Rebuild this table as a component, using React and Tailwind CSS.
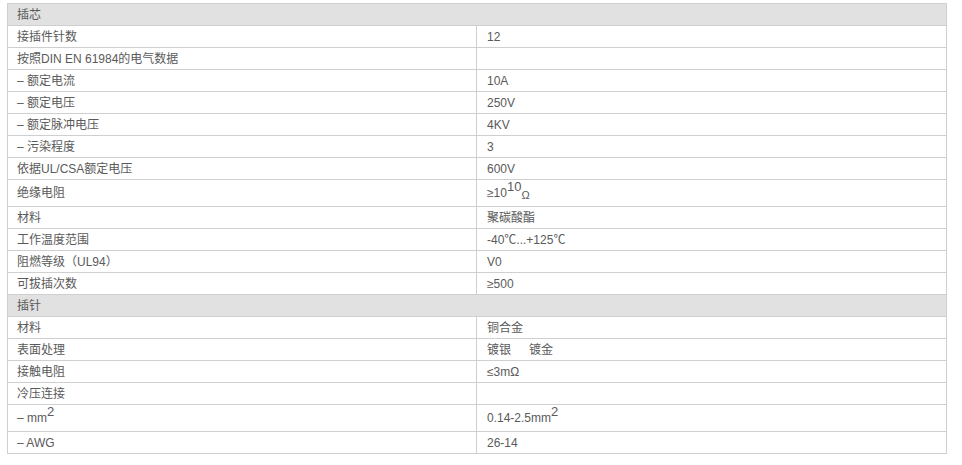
import React from 'react';

const SUP = ({ children }) => (
  <span className="text-[13px] relative top-[-6px] leading-none">{children}</span>
);

const ROWS = [
  { head: '插芯' },
  { label: '接插件针数', value: '12' },
  { label: '按照DIN EN 61984的电气数据', value: '' },
  { label: '– 额定电流', value: '10A' },
  { label: '– 额定电压', value: '250V' },
  { label: '– 额定脉冲电压', value: '4KV' },
  { label: '– 污染程度', value: '3' },
  { label: '依据UL/CSA额定电压', value: '600V' },
  {
    label: '绝缘电阻',
    value: (
      <span>
        ≥10<SUP>10</SUP>
        <span className="text-[11px] relative top-[2px]">Ω</span>
      </span>
    ),
    tall: true
  },
  { label: '材料', value: '聚碳酸酯' },
  { label: '工作温度范围', value: '-40℃...+125℃' },
  { label: '阻燃等级（UL94）', value: 'V0' },
  { label: '可拔插次数', value: '≥500' },
  { head: '插针' },
  { label: '材料', value: '铜合金' },
  {
    label: '表面处理',
    value: (
      <span>
        镀银<span className="ml-[18px]">镀金</span>
      </span>
    )
  },
  { label: '接触电阻', value: '≤3mΩ' },
  { label: '冷压连接', value: '' },
  {
    label: (
      <span>
        – mm<SUP>2</SUP>
      </span>
    ),
    value: (
      <span>
        0.14-2.5mm<SUP>2</SUP>
      </span>
    ),
    tall: true
  },
  { label: '– AWG', value: '26-14' }
];

export default function App() {
  return (
    <div
      className="bg-white w-[962px] h-[465px] pt-[3px] pl-[7px] text-[12px] text-[#5a5a5a]"
      style={{ fontFamily: '"Liberation Sans", Arial, "Noto Sans CJK SC", sans-serif' }}
    >
      <div className="w-[940px] border-t border-l border-r border-[#cfcfcf]">
        {ROWS.map((row, i) =>
          row.head ? (
            <div
              key={i}
              className="h-[22px] flex items-center pl-[9px] bg-[#e1e1e1] border-b border-[#cfcfcf]"
            >
              {row.head}
            </div>
          ) : (
            <div
              key={i}
              className={`flex border-b border-[#cfcfcf] ${row.tall ? 'h-[27px]' : 'h-[22px]'}`}
            >
              <div className="w-[469px] flex items-center pl-[9px] border-r border-[#cfcfcf]">
                {row.label}
              </div>
              <div className="flex-1 flex items-center pl-[10px]">{row.value}</div>
            </div>
          )
        )}
      </div>
    </div>
  );
}
